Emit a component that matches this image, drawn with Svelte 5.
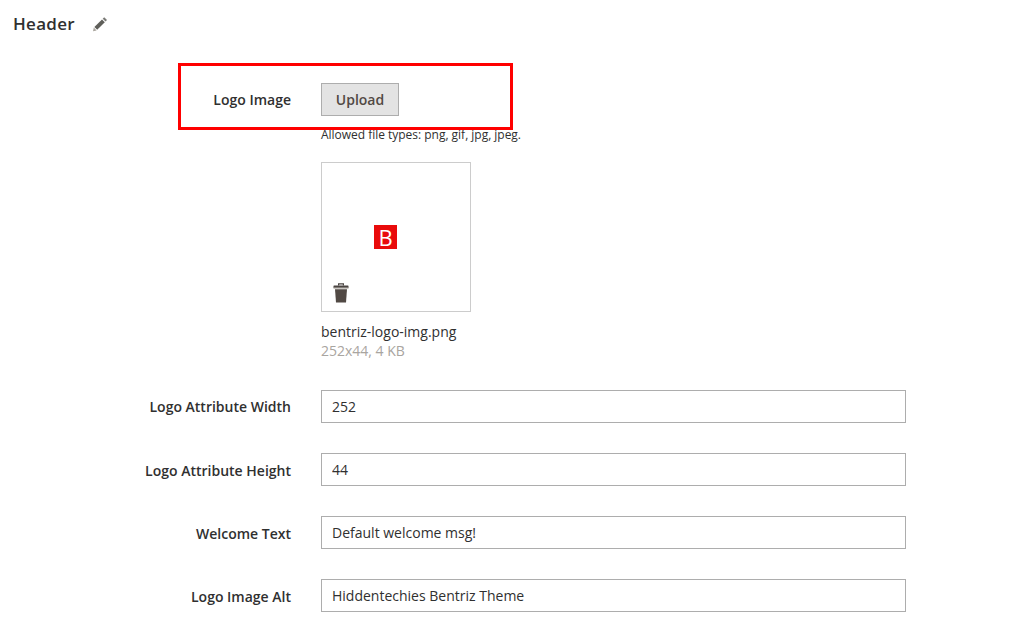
<script>
	const fields = [
		{ label: 'Logo Attribute Width', value: '252' },
		{ label: 'Logo Attribute Height', value: '44' },
		{ label: 'Welcome Text', value: 'Default welcome msg!' },
		{ label: 'Logo Image Alt', value: 'Hiddentechies Bentriz Theme' }
	]
</script>

<div class="page">
	<div class="section-title">
		<h2>Header</h2>
		<svg class="pencil" viewBox="0 0 16 16" width="16" height="16">
			<path d="M12.2 1.2l2.8 2.8-1.5 1.5-2.8-2.8z" fill="#7a7a76" />
			<path d="M10 3.4l2.8 2.8-7.6 7.6-2.8-2.8z" fill="#5f5f5a" />
			<path d="M1.8 11.6l2.8 2.8-3.6.9z" fill="#a8a49c" />
		</svg>
	</div>

	<div class="row upload-row">
		<div class="highlight"></div>
		<div class="label">Logo Image</div>
		<div class="control">
			<button class="upload">Upload</button>
			<p class="note">Allowed file types: png, gif, jpg, jpeg.</p>
			<div class="preview">
				<span class="logo">B</span>
				<svg class="trash" viewBox="0 0 16 20" width="16" height="20">
					<path d="M5.6 2.6V.8h4.8v1.8" fill="none" stroke="#4a4542" stroke-width="1.2" />
					<rect x="0.5" y="2.4" width="15" height="2.6" rx="0.6" fill="#4a4542" />
					<rect x="0.5" y="4.4" width="15" height="1.2" fill="#a8a39c" />
					<path d="M2 6.2h12l-1 13.2H3z" fill="#514944" />
				</svg>
			</div>
			<div class="file-name">bentriz-logo-img.png</div>
			<div class="file-meta">252x44, 4 KB</div>
		</div>
	</div>

	{#each fields as field}
		<div class="row field">
			<div class="label">{field.label}</div>
			<div class="control">
				<input type="text" value={field.value} />
			</div>
		</div>
	{/each}
</div>

<style>
	:global(body) {
		background: #fff;
		font-family: 'Open Sans', sans-serif;
		color: #303030;
	}

	.page {
		height: 631px;
		overflow: hidden;
		box-sizing: border-box;
		padding-top: 14px;
	}

	.section-title {
		display: flex;
		align-items: center;
		gap: 17px;
		padding-left: 13px;
		height: 20px;
	}

	h2 {
		margin: 0;
		font-size: 17px;
		font-weight: 600;
		letter-spacing: 0.3px;
		line-height: 20px;
		color: #303030;
	}

	.pencil {
		margin-top: -1px;
	}

	.row {
		display: flex;
		gap: 30px;
		position: relative;
	}

	.upload-row {
		margin-top: 49px;
	}

	.highlight {
		position: absolute;
		left: 178px;
		top: -20px;
		width: 329px;
		height: 61px;
		border: 3px solid #f00;
	}

	.label {
		width: 291px;
		height: 33px;
		flex: none;
		box-sizing: border-box;
		text-align: right;
		font-size: 14px;
		font-weight: 600;
		line-height: 33px;
		color: #303030;
	}

	.field + .field .label {
		line-height: 35px;
	}

	.control {
		width: 585px;
	}

	.upload {
		display: block;
		width: 78px;
		height: 33px;
		padding: 0;
		background: #e3e3e3;
		border: 1px solid #adadad;
		font-family: inherit;
		font-size: 14px;
		font-weight: 600;
		color: #514943;
	}

	.note {
		margin: 10px 0 0;
		font-size: 12px;
		line-height: 18px;
		letter-spacing: -0.02px;
		color: #303030;
	}

	.preview {
		position: relative;
		box-sizing: border-box;
		width: 150px;
		height: 150px;
		margin-top: 18px;
		border: 1px solid #ccc;
		display: flex;
		align-items: center;
		justify-content: center;
	}

	.logo {
		width: 23px;
		height: 24px;
		margin-right: 21px;
		background: #e90b0b;
		color: #fff;
		font-size: 22px;
		line-height: 24px;
		text-align: center;
	}

	.trash {
		position: absolute;
		left: 11px;
		bottom: 8px;
	}

	.file-name {
		margin-top: 10px;
		font-size: 14px;
		line-height: 20px;
		color: #303030;
	}

	.file-meta {
		font-size: 14px;
		line-height: 18px;
		color: #a9a5a0;
	}

	.field {
		margin-bottom: 30px;
	}

	.upload-row + .field {
		margin-top: 30px;
	}

	input {
		display: block;
		box-sizing: border-box;
		width: 585px;
		height: 33px;
		padding: 0 10px;
		border: 1px solid #adadad;
		background: #fff;
		font-family: inherit;
		font-size: 14px;
		color: #303030;
		outline: none;
	}
</style>
